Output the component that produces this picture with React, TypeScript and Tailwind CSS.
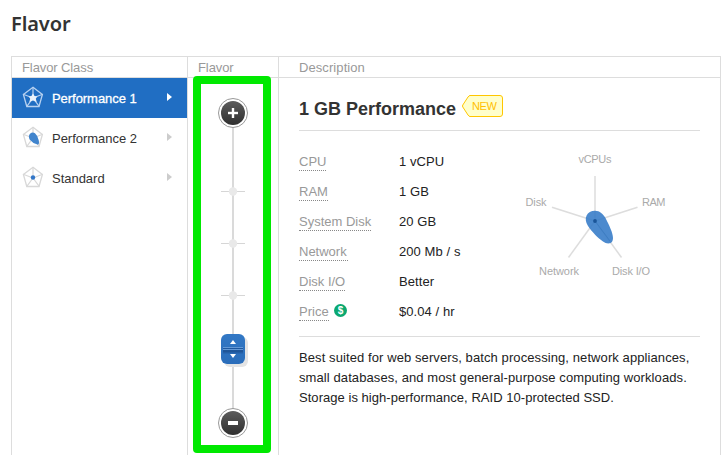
import React from 'react';

const SPOKES = [
  { x2: 80, y2: 26 },
  { x2: 122.5, y2: 57.3 },
  { x2: 106.5, y2: 107.5 },
  { x2: 53.5, y2: 107.5 },
  { x2: 37, y2: 57.3 },
];

function ClassIcon({ kind, stroke }: { kind: string; stroke: string }) {
  return (
    <svg width="22" height="22" viewBox="0 0 22 22" fill="none" className="mb-[2px] shrink-0">
      <path d="M11 1.2 L20.4 8.5 L17 20.5 H4.8 L1.4 8.5 Z" stroke={stroke} strokeWidth="1.3" />
      <path d="M11 12 V1 M11 12 L20.6 8.3 M11 12 L17.2 20.3 M11 12 L4.8 20.3 M11 12 L1.2 8.3" stroke={stroke} strokeWidth="1.2" />
      {kind === 'star' && <path d="M11 7.5 L12.6 10 L15.2 10.6 L13.8 12.7 L14.7 16 L11 14.4 L7.3 16 L8.2 12.7 L6.8 10.6 L9.4 10 Z" fill="#eaf2fc" />}
      {kind === 'blob' && <path d="M8 7.8 Q10.4 5.8 13 7.2 Q16.2 10 16.8 14.5 Q17.6 19 15.5 18.6 Q11 17.5 7.6 13.4 Q6 10 8 7.8 Z" fill="#4285cd" />}
      {kind === 'dot' && <circle cx="11" cy="11.5" r="2.2" fill="#3276c8" />}
    </svg>
  );
}

function ClassRow({ name, kind, active = false }: { name: string; kind: string; active?: boolean }) {
  return (
    <div className={`flex h-10 items-center pl-[10px] pr-[15px] ${active ? 'bg-[#206ec3] text-white' : 'text-[#333]'}`}>
      <ClassIcon kind={kind} stroke={active ? '#b7d1f0' : '#d8d8d8'} />
      <span className={`ml-2 pt-px text-[13px] leading-5 ${active ? 'tracking-[-0.05px] [-webkit-text-stroke:0.3px_white]' : 'tracking-[-0.02px]'}`}>{name}</span>
      <svg width="5" height="8" viewBox="0 0 5 8" className="mb-[3px] ml-auto">
        <path d="M0 0 L5 4 L0 8 Z" fill={active ? '#fff' : '#ccc'} />
      </svg>
    </div>
  );
}

function RoundButton({ plus = false }: { plus?: boolean }) {
  return (
    <button className="relative flex size-[30px] shrink-0 items-center justify-center rounded-full border border-[#999] bg-white">
      <span className="flex size-6 items-center justify-center rounded-full bg-gradient-to-b from-[#5c5c5c] to-[#303030]">
        <svg width="10" height="10" viewBox="0 0 10 10">
          {plus ? <path d="M0 4H4V0H6V4H10V6H6V10H4V6H0Z" fill="#fff" stroke="#fff" strokeWidth="0.4" /> : <path d="M0 3H10V7H0Z" fill="#fff" />}
        </svg>
      </span>
    </button>
  );
}

function Tick() {
  return (
    <div className="relative h-[52px] w-6 pt-[22px]">
      <svg width="24" height="9" viewBox="0 0 24 9">
        <path d="M0 4.5H24" stroke="#d6d6d6" />
        <circle cx="12" cy="4.5" r="4.2" fill="#e9e9e9" />
      </svg>
    </div>
  );
}

function Slider() {
  return (
    <div className="relative flex flex-col items-center pt-5">
      <div className="absolute bottom-3 top-9 w-0.5 bg-[#dadada]" />
      <RoundButton plus />
      <div className="h-[37px]" />
      <Tick />
      <Tick />
      <Tick />
      <div className="relative mt-[13px] flex h-[30px] w-6 flex-col items-center rounded-[6px] bg-gradient-to-b from-[#3278c5] to-[#2a6dba] pt-1.5 shadow-[3px_3px_0px_#e4e4e4]">
        <svg width="24" height="18" viewBox="0 0 24 18">
          <defs>
            <linearGradient id="grip" x1="0" y1="0" x2="0" y2="1">
              <stop offset="0" stopColor="#1f5aa3" />
              <stop offset="0.65" stopColor="#1f5598" />
              <stop offset="1" stopColor="#2a6dba" />
            </linearGradient>
          </defs>
          <path d="M2 7H22V14H2Z" fill="url(#grip)" />
          <path d="M2 7.5H22M2 9.5H22" stroke="#6399d6" />
          <path d="M9 4L12 0L15 4Z M9 14L12 18L15 14Z" fill="#fff" />
        </svg>
      </div>
      <div className="h-11" />
      <RoundButton />
    </div>
  );
}

function Spec({ label, value, width, price = false }: { label: string; value: string; width: number; price?: boolean }) {
  return (
    <div className="flex h-[30px] text-[13px]">
      <div className="flex w-[100px]">
        <span style={{ width }} className="h-[19px] whitespace-nowrap border-b border-dotted border-[#888] leading-5 text-[#999]">{label}</span>
        {price && (
          <span className="ml-[5px] mt-[2px] flex size-[13px] items-center justify-center rounded-full bg-[#0ba871] text-[10px] font-bold leading-none text-white">$</span>
        )}
      </div>
      <span className="leading-5 tracking-[0.08px] text-[#222]">{value}</span>
    </div>
  );
}

function RadarChart() {
  return (
    <svg width="160" height="130" viewBox="0 0 160 130" className="mt-[-2px] shrink-0 text-[11px]" fill="#aaa">
      {SPOKES.map((s, i) => (
        <path key={i} d={`M80 71L${s.x2} ${s.y2}`} stroke="#ddd" strokeWidth="1.5" />
      ))}
      <path d="M80 60.7 C85 60.7 88 64 90.5 68 C94.5 76 98 83 98 88 C98 94.5 92 94.5 88 91.5 C83 88 77 82 73 76 C68 68 72 60.7 80 60.7Z" fill="#337ac7" fillOpacity="0.88" />
      <path d="M80 71L95 91" stroke="#2668ad" strokeWidth="0.6" strokeOpacity="0.5" />
      <circle cx="80" cy="71" r="1.9" fill="#1a5599" />
      <text x="80" y="13" textAnchor="middle" textLength="33">vCPUs</text>
      <text x="127" y="56" textLength="23.5">RAM</text>
      <text x="10.5" y="56" textLength="21">Disk</text>
      <text x="24" y="125" textLength="40">Network</text>
      <text x="97" y="125" textLength="38">Disk I/O</text>
    </svg>
  );
}

export default function App() {
  return (
    <div className="h-[455px] w-[722px] overflow-hidden bg-white pl-[11px] font-['Liberation_Sans',Arial,sans-serif] text-[#333]">
      <h1 className="h-14 pt-[10px] font-['Noto_Sans',sans-serif] text-[20px] font-semibold leading-7 tracking-[-0.1px]">Flavor</h1>
      <div className="flex h-[399px] w-[710px] border-x border-t border-[#ddd]">
        <section className="w-44 border-r border-[#ddd]">
          <h2 className="h-[21px] border-b border-[#ddd] pl-[10px] text-[13px] leading-[21px] tracking-[-0.1px] text-[#999]">Flavor Class</h2>
          <ClassRow name="Performance 1" kind="star" active />
          <ClassRow name="Performance 2" kind="blob" />
          <ClassRow name="Standard" kind="dot" />
        </section>
        <section className="relative w-[91px] border-r border-[#ddd]">
          <h2 className="h-[21px] border-b border-[#ddd] pl-[10px] text-[13px] leading-[21px] tracking-[-0.1px] text-[#999]">Flavor</h2>
          <Slider />
          <div className="absolute left-[5px] top-[19px] h-[377px] w-[78px] rounded-[4px] border-8 border-[#00e900]" />
        </section>
        <section className="flex-1">
          <h2 className="h-[21px] border-b border-[#ddd] pl-5 text-[13px] leading-[21px] tracking-[0.08px] text-[#999]">Description</h2>
          <div className="pl-5 pr-5">
            <div className="flex h-[53px] border-b border-[#ddd] pt-[17px]">
              <h3 className="w-[163px] whitespace-nowrap text-[18px] font-bold leading-7">1 GB Performance</h3>
              <svg width="41" height="22" viewBox="0 0 41 22">
                <path d="M8 .5H38Q40.5 .5 40.5 3V19Q40.5 21.5 38 21.5H8Q7 21.5 6 20L.8 12Q.2 11 .8 10L6 2Q7 .5 8 .5Z" fill="#ffffcb" stroke="#ffc600" />
                <text x="10" y="15.3" fill="#ffc000" fontSize="11" textLength="25">NEW</text>
              </svg>
            </div>
            <div className="flex h-[206px] border-b border-[#ddd] pt-[21px]">
              <div className="w-[216px]">
                <Spec label="CPU" value="1 vCPU" width={27} />
                <Spec label="RAM" value="1 GB" width={29} />
                <Spec label="System Disk" value="20 GB" width={72} />
                <Spec label="Network" value="200 Mb / s" width={49} />
                <Spec label="Disk I/O" value="Better" width={46} />
                <Spec label="Price" value="$0.04 / hr" width={30} price />
              </div>
              <RadarChart />
            </div>
            <p className="whitespace-nowrap pt-[11px] text-[13px] leading-5 tracking-[0.09px] text-[#222]">
              Best suited for web servers, batch processing, network appliances,<br />
              small databases, and most general-purpose computing workloads.<br />
              <span className="tracking-[0.04px]">Storage is high-performance, RAID 10-protected SSD.</span>
            </p>
          </div>
        </section>
      </div>
    </div>
  );
}
